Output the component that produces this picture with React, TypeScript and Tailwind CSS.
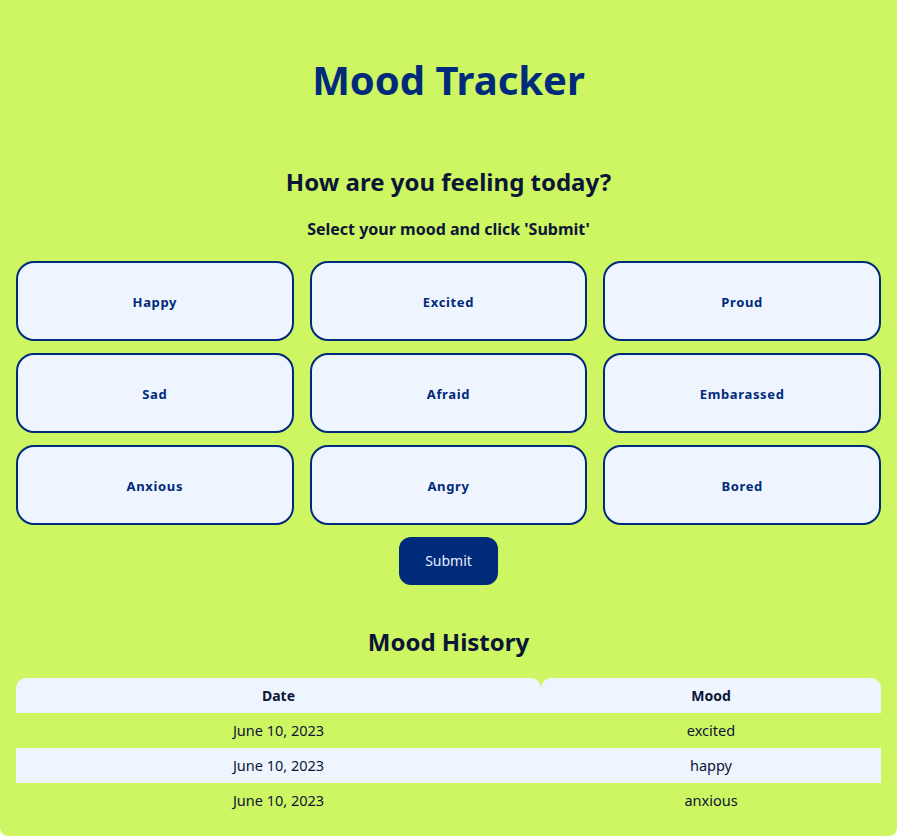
import React, { useState } from 'react';

const moods = ['Happy', 'Excited', 'Proud', 'Sad', 'Afraid', 'Embarassed', 'Anxious', 'Angry', 'Bored'];

const history = [
  { date: 'June 10, 2023', mood: 'excited' },
  { date: 'June 10, 2023', mood: 'happy' },
  { date: 'June 10, 2023', mood: 'anxious' },
];

const App: React.FC = () => {
  const [selected, setSelected] = useState<string | null>(null);

  return (
    <div className="min-h-[836px] bg-[#cef562] rounded-b-lg px-4 pb-4 pt-[53px] font-['Noto_Sans','Open_Sans',sans-serif]">
      <h1 className="text-center text-[40px] leading-[54px] font-bold text-[#002a7a]">Mood Tracker</h1>

      <h2 className="mt-[59px] text-center text-2xl leading-8 font-bold text-[#0b1636]">How are you feeling today?</h2>
      <p className="mt-[19px] text-center text-base leading-6 font-bold text-[#0b1636]">Select your mood and click 'Submit'</p>

      {/* Mood grid */}
      <div className="mt-[20px] grid grid-cols-3 gap-x-4 gap-y-3">
        {moods.map((m) => (
          <button
            key={m}
            onClick={() => setSelected(m)}
            className={`h-20 rounded-[18px] border-2 border-[#002a7a] bg-[#eef5ff] pt-1 text-[13px] font-bold tracking-wider text-[#002a7a] ${selected === m ? 'ring-2 ring-[#002a7a]' : ''}`}
          >
            {m}
          </button>
        ))}
      </div>

      <div className="mt-3 flex justify-center">
        <button className="h-12 w-[99px] rounded-xl bg-[#002a7a] text-sm text-[#e6eeff]">Submit</button>
      </div>

      <h2 className="mt-[41px] text-center text-2xl leading-8 font-bold text-[#0b1636]">Mood History</h2>

      <table className="mt-[20px] w-full border-collapse text-[14.5px] text-[#0b1636]">
        <thead>
          <tr>
            <th className="w-[525px] h-[35px] rounded-t-[10px] bg-[#eef5ff] text-sm font-bold">Date</th>
            <th className="h-[35px] rounded-t-[10px] bg-[#eef5ff] text-sm font-bold">Mood</th>
          </tr>
        </thead>
        <tbody>
          {history.map((h, i) => (
            <tr key={i} className={i % 2 === 1 ? 'bg-[#eef5ff]' : ''}>
              <td className="h-[35px] text-center">{h.date}</td>
              <td className="h-[35px] text-center">{h.mood}</td>
            </tr>
          ))}
        </tbody>
      </table>
    </div>
  );
};

export default App;
